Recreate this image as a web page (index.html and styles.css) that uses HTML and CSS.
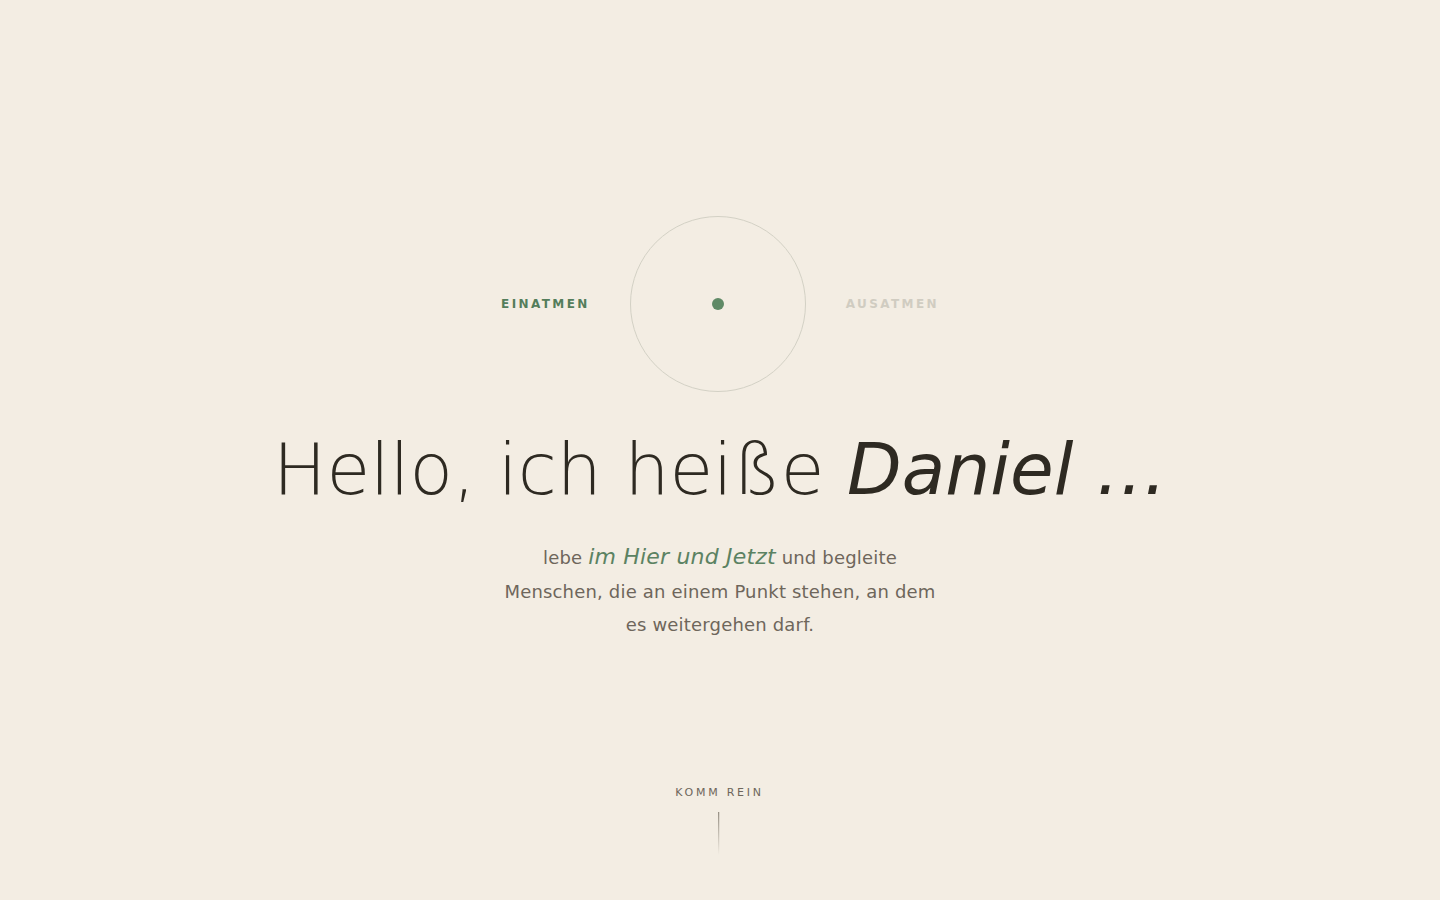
FILE: index.html
```html
<!DOCTYPE html>
<html lang="de">
<head>
<meta charset="utf-8">
<title>Daniel</title>
<link rel="stylesheet" href="styles.css">
</head>
<body>
<section class="hero">
  <div class="breath">
    <span class="label label-in">EINATMEN</span>
    <div class="circle"><span class="dot"></span></div>
    <span class="label label-out">AUSATMEN</span>
  </div>
  <h1 class="title">Hello, ich heiße <em>Daniel …</em></h1>
  <p class="intro">lebe <em>im Hier und Jetzt</em> und begleite Menschen, die an einem Punkt stehen, an dem es weitergehen darf.</p>
  <a class="scroll" href="#">
    <span class="scroll-text">KOMM REIN</span>
    <span class="scroll-line"></span>
  </a>
</section>
</body>
</html>
```
FILE: styles.css
```css
html, body {
  margin: 0;
  padding: 0;
}
body {
  background: #f3ede3;
  font-family: "DejaVu Sans", sans-serif;
  color: #2e2a22;
}
.hero {
  position: relative;
  min-height: 100vh;
  box-sizing: border-box;
  padding-bottom: 42px;
  display: flex;
  flex-direction: column;
  align-items: center;
  justify-content: center;
  text-align: center;
}
.breath {
  display: flex;
  align-items: center;
  gap: 40px;
}
.label {
  font-size: 12px;
  font-weight: 700;
  letter-spacing: 0.2em;
}
.label-in { color: #547d5b; }
.label-out { color: #d0ccc1; }
.circle {
  width: 174px;
  height: 174px;
  border: 1px solid #d3d1c5;
  border-radius: 50%;
  display: flex;
  align-items: center;
  justify-content: center;
}
.dot {
  width: 12px;
  height: 12px;
  border-radius: 50%;
  background: #5f8a66;
}
.title {
  margin: 38px 0 0;
  font-size: 71px;
  line-height: 1.12;
  font-weight: 200;
  color: #2e2a22;
}
.title em {
  font-style: italic;
  font-weight: 400;
}
.intro {
  margin: 30px 0 0;
  max-width: 440px;
  font-size: 18px;
  line-height: 33.5px;
  letter-spacing: 0.01em;
  color: #6e665b;
}
.intro em {
  font-size: 22px;
  color: #5b8262;
  font-style: italic;
}
.scroll {
  position: absolute;
  left: 50%;
  bottom: 45px;
  transform: translateX(-50%);
  display: flex;
  flex-direction: column;
  align-items: center;
  gap: 13px;
  text-decoration: none;
}
.scroll-text {
  font-size: 11px;
  letter-spacing: 0.25em;
  margin-left: -1px;
  color: #6e665b;
}
.scroll-line {
  width: 1px;
  height: 43px;
  margin-left: -2px;
  background: linear-gradient(to bottom, #7f786c, rgba(127,120,108,0));
}
```
